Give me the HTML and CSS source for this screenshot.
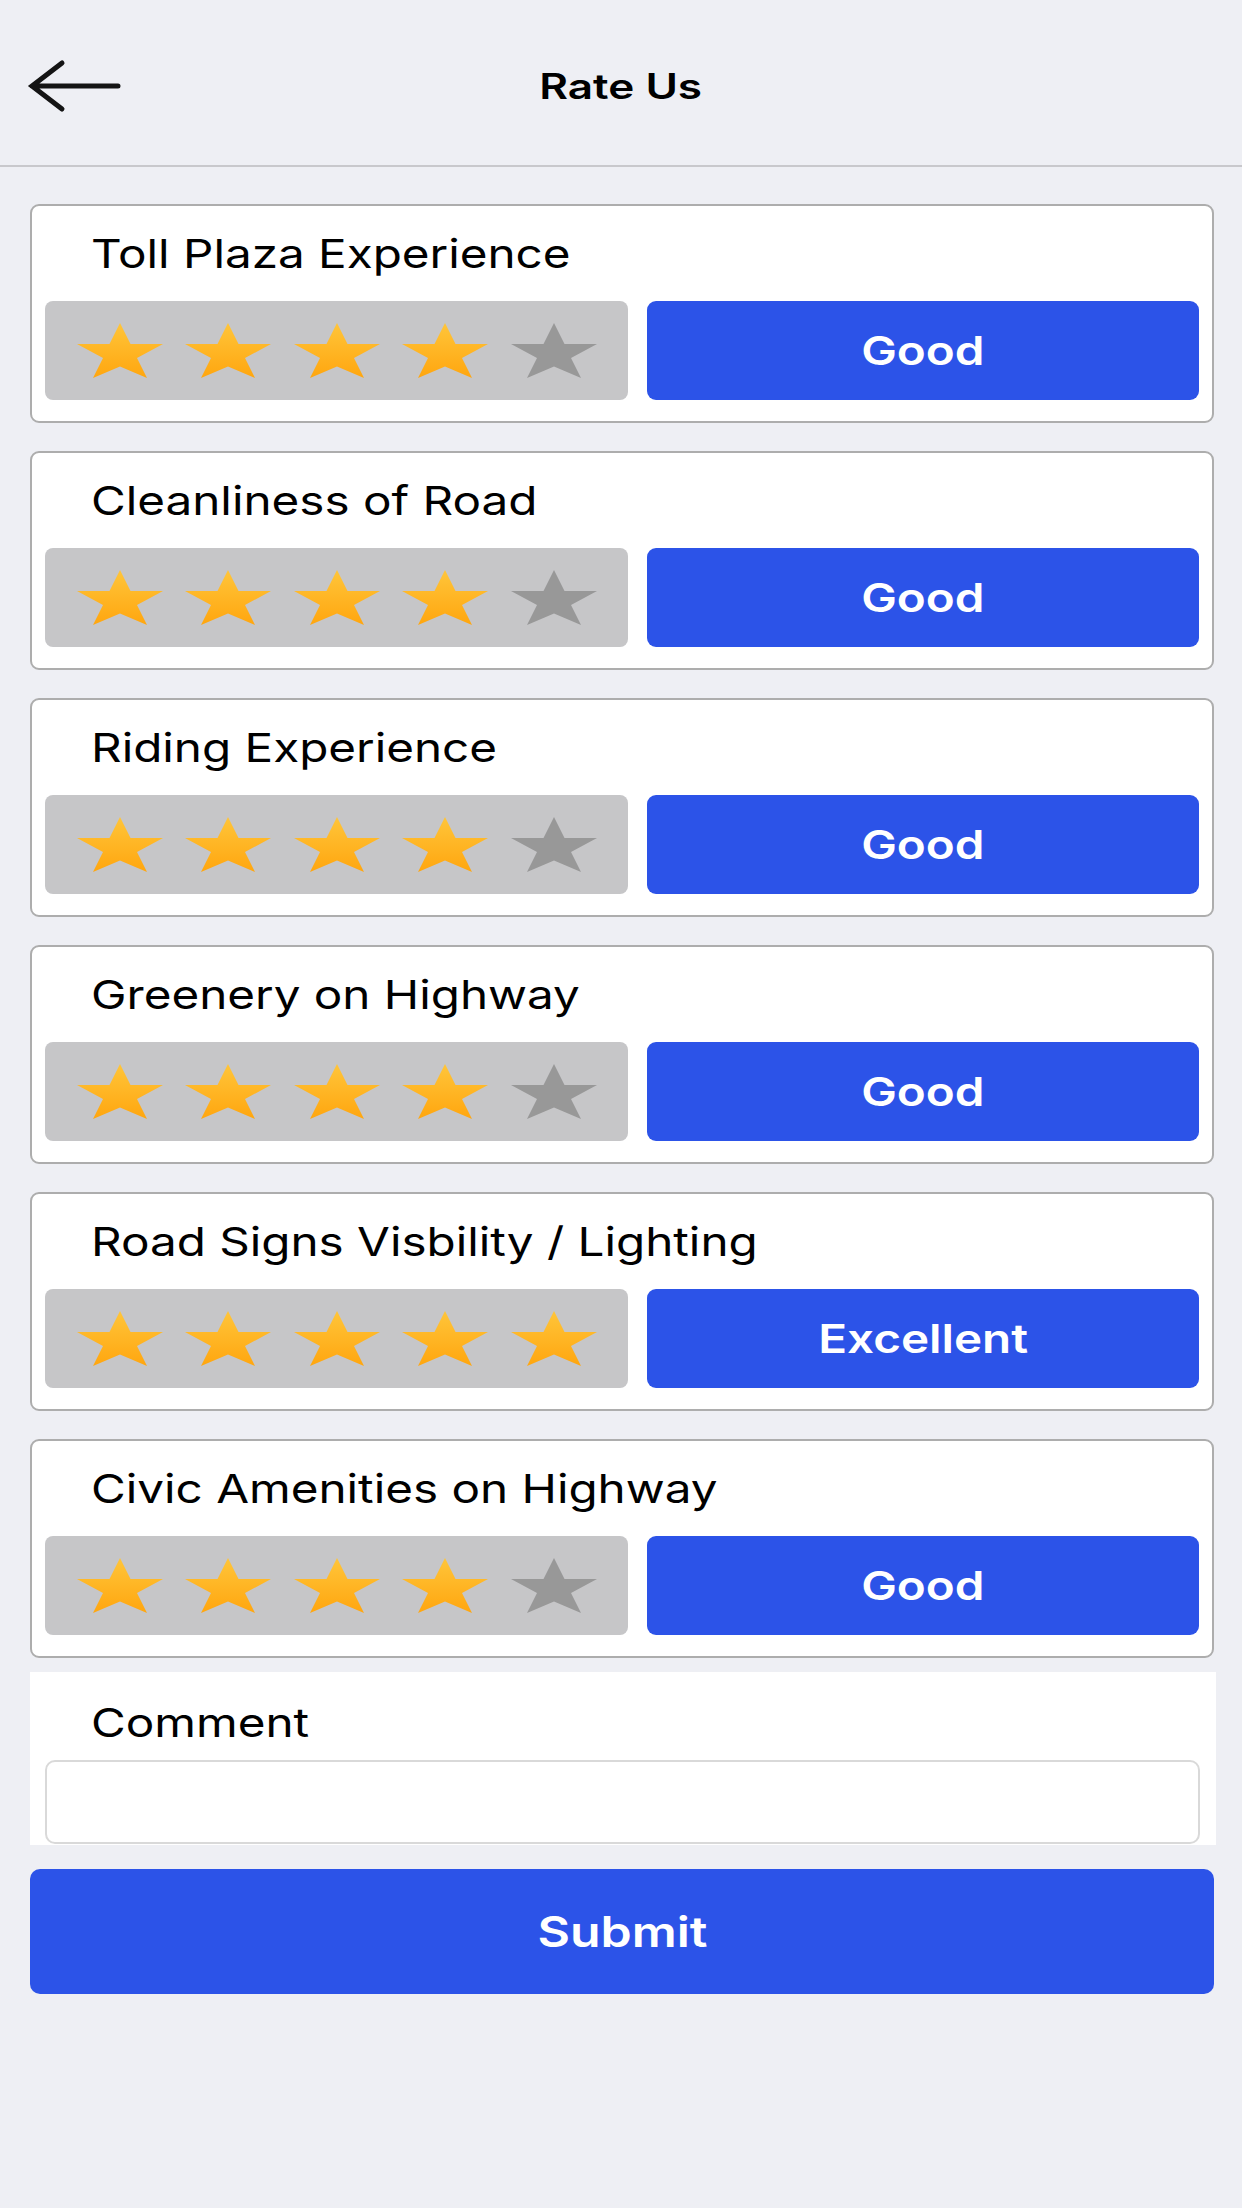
FILE: index.html
```html
<!DOCTYPE html>
<html lang="en">
<head>
<meta charset="utf-8">
<title>Rate Us</title>
<link rel="stylesheet" href="styles.css">
</head>
<body>
<header class="topbar">
  <button class="back" aria-label="Back">
    <svg width="100" height="60" viewBox="0 0 100 60">
      <path d="M38 7 L8 30 L38 53 M8 30 H94" fill="none" stroke="#141414" stroke-width="5" stroke-linecap="round" stroke-linejoin="miter"/>
    </svg>
  </button>
  <h1 class="title"><span class="tx">Rate Us</span></h1>
  <span></span>
</header>

<main class="content">
  <section class="card">
    <h2 class="card-title"><span class="tx">Toll Plaza Experience</span></h2>
    <div class="row">
      <div class="stars">
        <svg class="star on" viewBox="0 0 86 55" preserveAspectRatio="none"><use href="#s"/></svg>
        <svg class="star on" viewBox="0 0 86 55" preserveAspectRatio="none"><use href="#s"/></svg>
        <svg class="star on" viewBox="0 0 86 55" preserveAspectRatio="none"><use href="#s"/></svg>
        <svg class="star on" viewBox="0 0 86 55" preserveAspectRatio="none"><use href="#s"/></svg>
        <svg class="star off" viewBox="0 0 86 55" preserveAspectRatio="none"><use href="#s"/></svg>
      </div>
      <div class="verdict"><span class="tx">Good</span></div>
    </div>
  </section>

  <section class="card">
    <h2 class="card-title"><span class="tx">Cleanliness of Road</span></h2>
    <div class="row">
      <div class="stars">
        <svg class="star on" viewBox="0 0 86 55" preserveAspectRatio="none"><use href="#s"/></svg>
        <svg class="star on" viewBox="0 0 86 55" preserveAspectRatio="none"><use href="#s"/></svg>
        <svg class="star on" viewBox="0 0 86 55" preserveAspectRatio="none"><use href="#s"/></svg>
        <svg class="star on" viewBox="0 0 86 55" preserveAspectRatio="none"><use href="#s"/></svg>
        <svg class="star off" viewBox="0 0 86 55" preserveAspectRatio="none"><use href="#s"/></svg>
      </div>
      <div class="verdict"><span class="tx">Good</span></div>
    </div>
  </section>

  <section class="card">
    <h2 class="card-title"><span class="tx">Riding Experience</span></h2>
    <div class="row">
      <div class="stars">
        <svg class="star on" viewBox="0 0 86 55" preserveAspectRatio="none"><use href="#s"/></svg>
        <svg class="star on" viewBox="0 0 86 55" preserveAspectRatio="none"><use href="#s"/></svg>
        <svg class="star on" viewBox="0 0 86 55" preserveAspectRatio="none"><use href="#s"/></svg>
        <svg class="star on" viewBox="0 0 86 55" preserveAspectRatio="none"><use href="#s"/></svg>
        <svg class="star off" viewBox="0 0 86 55" preserveAspectRatio="none"><use href="#s"/></svg>
      </div>
      <div class="verdict"><span class="tx">Good</span></div>
    </div>
  </section>

  <section class="card">
    <h2 class="card-title"><span class="tx">Greenery on Highway</span></h2>
    <div class="row">
      <div class="stars">
        <svg class="star on" viewBox="0 0 86 55" preserveAspectRatio="none"><use href="#s"/></svg>
        <svg class="star on" viewBox="0 0 86 55" preserveAspectRatio="none"><use href="#s"/></svg>
        <svg class="star on" viewBox="0 0 86 55" preserveAspectRatio="none"><use href="#s"/></svg>
        <svg class="star on" viewBox="0 0 86 55" preserveAspectRatio="none"><use href="#s"/></svg>
        <svg class="star off" viewBox="0 0 86 55" preserveAspectRatio="none"><use href="#s"/></svg>
      </div>
      <div class="verdict"><span class="tx">Good</span></div>
    </div>
  </section>

  <section class="card">
    <h2 class="card-title"><span class="tx">Road Signs Visbility / Lighting</span></h2>
    <div class="row">
      <div class="stars">
        <svg class="star on" viewBox="0 0 86 55" preserveAspectRatio="none"><use href="#s"/></svg>
        <svg class="star on" viewBox="0 0 86 55" preserveAspectRatio="none"><use href="#s"/></svg>
        <svg class="star on" viewBox="0 0 86 55" preserveAspectRatio="none"><use href="#s"/></svg>
        <svg class="star on" viewBox="0 0 86 55" preserveAspectRatio="none"><use href="#s"/></svg>
        <svg class="star on" viewBox="0 0 86 55" preserveAspectRatio="none"><use href="#s"/></svg>
      </div>
      <div class="verdict"><span class="tx">Excellent</span></div>
    </div>
  </section>

  <section class="card">
    <h2 class="card-title"><span class="tx">Civic Amenities on Highway</span></h2>
    <div class="row">
      <div class="stars">
        <svg class="star on" viewBox="0 0 86 55" preserveAspectRatio="none"><use href="#s"/></svg>
        <svg class="star on" viewBox="0 0 86 55" preserveAspectRatio="none"><use href="#s"/></svg>
        <svg class="star on" viewBox="0 0 86 55" preserveAspectRatio="none"><use href="#s"/></svg>
        <svg class="star on" viewBox="0 0 86 55" preserveAspectRatio="none"><use href="#s"/></svg>
        <svg class="star off" viewBox="0 0 86 55" preserveAspectRatio="none"><use href="#s"/></svg>
      </div>
      <div class="verdict"><span class="tx">Good</span></div>
    </div>
  </section>

  <section class="comment">
    <label class="comment-label" for="cm"><span class="tx">Comment</span></label>
    <div class="comment-box" id="cm"></div>
  </section>

  <div class="submit"><span class="tx">Submit</span></div>
</main>

<svg class="defs" width="0" height="0" aria-hidden="true">
  <defs>
    <linearGradient id="gold" x1="0" y1="0" x2="0" y2="1">
      <stop offset="0" stop-color="#ffc53a"/>
      <stop offset="1" stop-color="#ffa60f"/>
    </linearGradient>
    <polygon id="s" points="43,0 53.5,21 86,21 60,35 70,55 43,43.5 16,55 26,35 0,21 32.5,21"/>
  </defs>
</svg>
</body>
</html>
```

FILE: styles.css
```css
* { box-sizing: border-box; }

html, body {
  margin: 0;
  padding: 0;
}

body {
  width: 1242px;
  min-height: 2208px;
  background: #eeeff4;
  font-family: "Inter", "Liberation Sans", sans-serif;
  color: #000;
}

.topbar {
  height: 167px;
  display: grid;
  grid-template-columns: 1fr auto 1fr;
  align-items: center;
  border-bottom: 2px solid #c8c8cc;
  padding-top: 6px;
}

.back {
  justify-self: start;
  margin-left: 24px;
  padding: 0;
  border: 0;
  background: none;
  display: flex;
}

.title {
  margin: 0;
  font-size: 35px;
  font-weight: 600;
}

.title .tx {
  transform: scaleX(1.26);
  transform-origin: center;
}

.tx {
  display: inline-block;
  transform: scaleX(1.19);
  transform-origin: left center;
}

.content {
  padding: 37px 28px 0 30px;
  display: flex;
  flex-direction: column;
}

.card {
  background: #fff;
  border: 2px solid #adadad;
  border-radius: 9px;
  height: 219px;
  padding: 0 13px 21px 13px;
  margin-bottom: 28px;
  display: flex;
  flex-direction: column;
}

.card-title {
  margin: 0;
  height: 95px;
  padding-left: 46px;
  display: flex;
  align-items: center;
  font-size: 40px;
  font-weight: 400;
}

.row {
  display: grid;
  grid-template-columns: 583px 1fr;
  column-gap: 19px;
  height: 99px;
}

.stars {
  background: #c6c6c8;
  border-radius: 8px;
  display: flex;
  align-items: center;
  justify-content: center;
  gap: 22.5px;
}

.star {
  width: 86px;
  height: 55px;
  display: block;
}

.star.on { fill: url(#gold); }
.star.off { fill: #989898; }

.verdict {
  background: #2c53e8;
  border-radius: 9px;
  color: #fff;
  display: flex;
  align-items: center;
  justify-content: center;
  font-size: 40px;
  font-weight: 600;
}

.verdict .tx,
.submit .tx {
  transform-origin: center;
}

.comment {
  margin-top: -14px;
  margin-right: -2px;
  background: #fff;
  padding: 0 16px 1px 15px;
}

.comment-label {
  display: flex;
  align-items: center;
  height: 88px;
  padding-top: 12px;
  padding-left: 46px;
  font-size: 40px;
}

.comment-box {
  height: 84px;
  border: 2px solid #d9d9d9;
  border-radius: 10px;
  background: #fff;
}

.submit {
  margin-top: 24px;
  height: 125px;
  background: #2c53e8;
  border-radius: 10px;
  color: #fff;
  font-size: 42px;
  font-weight: 600;
  display: flex;
  align-items: center;
  justify-content: center;
}

.defs {
  position: absolute;
  width: 0;
  height: 0;
}
```
